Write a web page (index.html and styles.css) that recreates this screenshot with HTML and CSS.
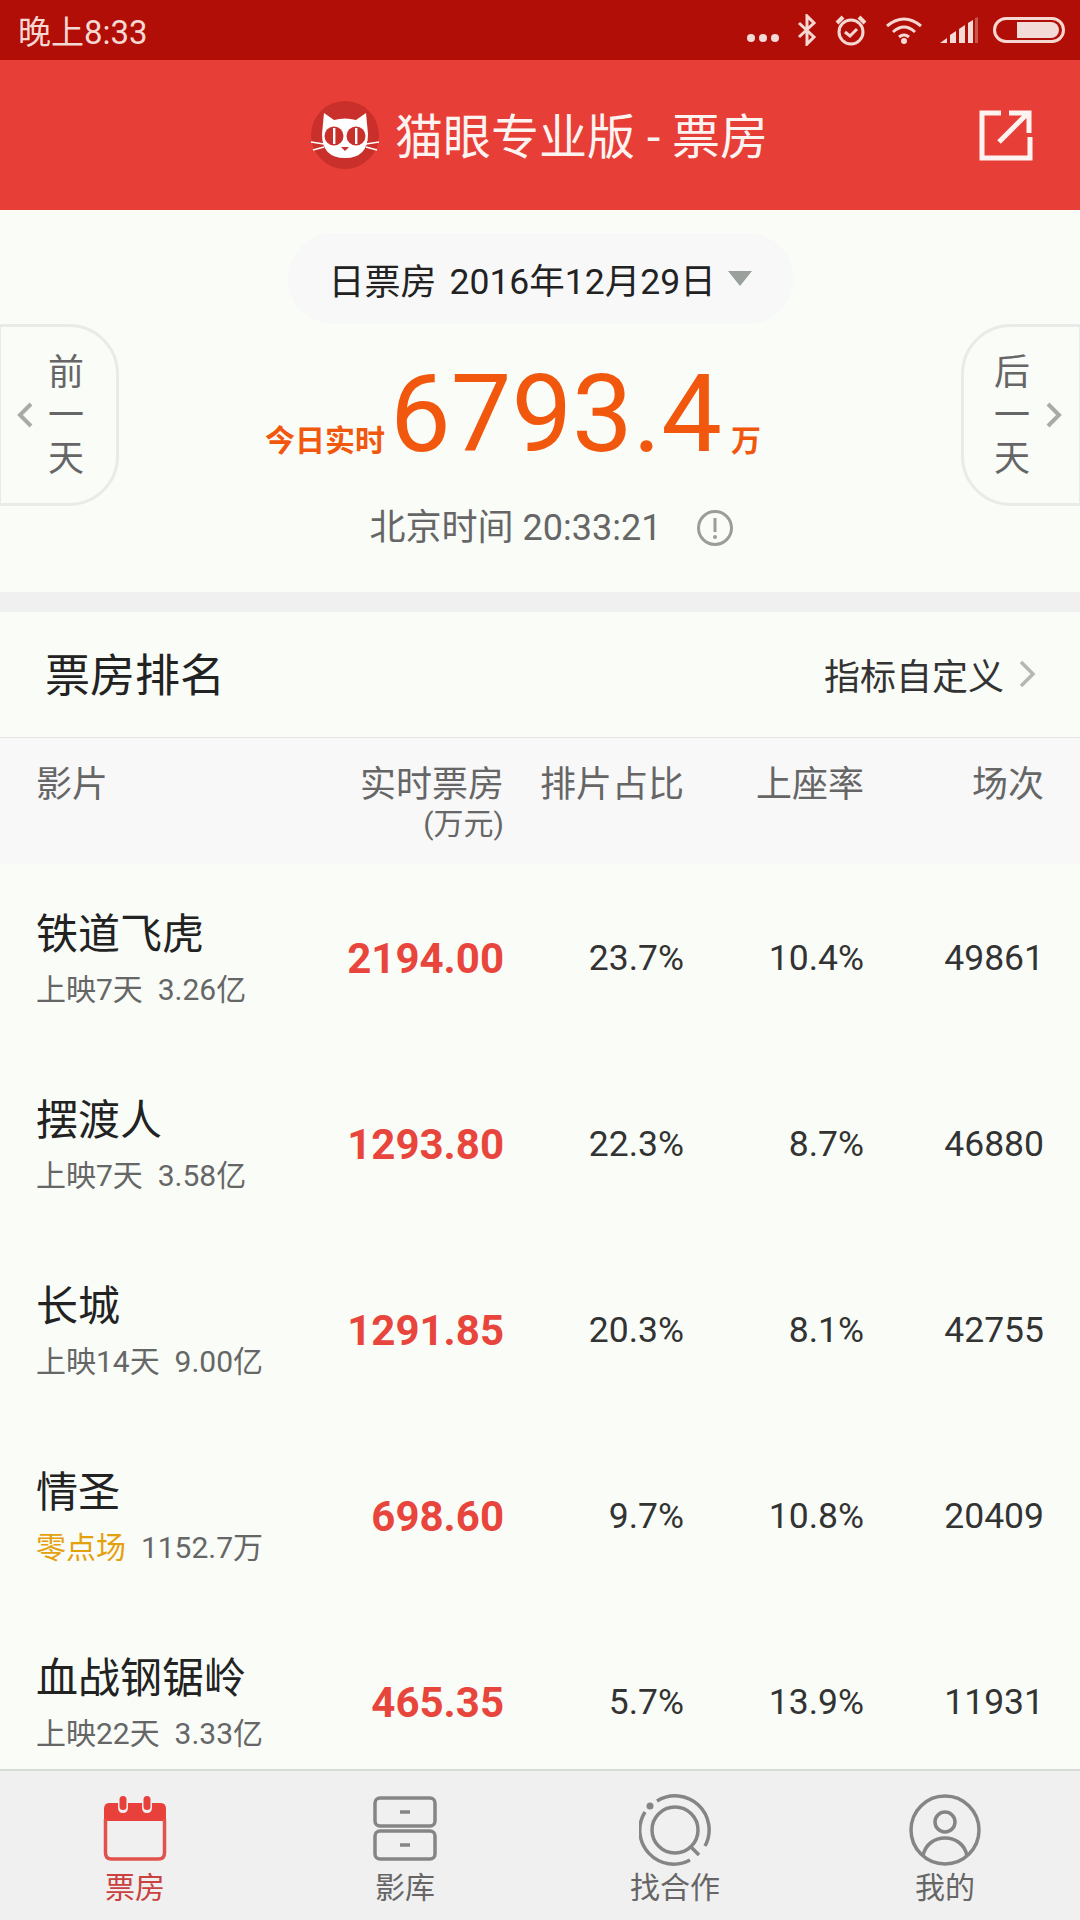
FILE: index.html
```html
<!DOCTYPE html>
<html lang="zh">

<head>
	<meta charset="utf-8">
	<title>猫眼专业版 - 票房</title>
	<link rel="stylesheet" href="styles.css">
</head>

<body>
	<div class="page">
		<div class="statusbar">
			<span class="clock">晚上8:33</span>
			<div class="status-icons">
				<svg class="ic-dots" width="34" height="10" viewBox="0 0 34 10"><circle cx="5" cy="5" r="4"/><circle cx="17" cy="5" r="4"/><circle cx="29" cy="5" r="4"/></svg>
				<svg class="ic-line" width="20" height="32" viewBox="0 0 20 32"><path d="M2 9 L17 23 L10 30 V2 L17 9 L2 23"/></svg>
				<svg class="ic-line" width="34" height="32" viewBox="0 0 34 32"><circle cx="17" cy="18" r="12"/><path d="M11 18 L16 22 L23 15"/><path d="M3 9 L9 3 M31 9 L25 3" stroke-width="4"/></svg>
				<svg class="ic-line" width="38" height="28" viewBox="0 0 38 28"><path d="M2 10 Q19 -4 36 10"/><path d="M8 16 Q19 6 30 16"/><path d="M14 21 Q19 17 24 21"/><circle class="fill" cx="19" cy="25" r="3"/></svg>
				<svg class="ic-signal" width="38" height="26" viewBox="0 0 38 26"><path d="M0 26 L7 21 V26 Z M10 18 L16 14 V26 H10 Z M19 12 L25 8 V26 H19 Z M28 6 L33 3 V26 H28 Z"/><path class="dim" d="M35 1 L38 0 V26 H35 Z"/></svg>
				<svg class="ic-battery" width="72" height="26" viewBox="0 0 72 26"><rect x="1.5" y="1.5" width="69" height="23" rx="11.5"/><path class="fill" d="M24 5 H58 A8 8 0 0 1 58 21 H24 Z"/></svg>
			</div>
		</div>

		<div class="appbar">
			<svg class="cat-logo" width="70" height="70" viewBox="0 0 70 70">
				<circle cx="35" cy="35" r="34" fill="#c9302c"/>
				<path fill="#fff" d="M14 13 L24 20 Q35 17 46 20 L56 13 L58 34 Q58 58 35 58 Q12 58 12 34 Z"/>
				<circle cx="24" cy="36" r="9.500" fill="#c9302c"/>
				<circle cx="46" cy="36" r="9.500" fill="#c9302c"/>
				<path fill="#fff" d="M23 28 h2.400 v16 h-2.400 Z M45 28 h2.400 v16 h-2.400 Z"/>
				<path fill="#c9302c" d="M31 47 h8 l-4 4 Z"/>
				<path stroke="#fff" stroke-width="1.600" fill="none" d="M1 42 L14 44 M3 50 L14 47 M69 42 L56 44 M67 50 L56 47"/>
			</svg>
			<span class="app-title">猫眼专业版 - 票房</span>
			<svg class="share-icon" width="54" height="52" viewBox="0 0 54 52"><path d="M22 4 H3 V49 H51 V28"/><path d="M20 33 L48 5 M30 4 H50 V24" /></svg>
		</div>

		<div class="summary">
			<div class="date-pill">
				<span class="date-kind">日票房</span>
				<span class="date-value">2016年12月29日</span>
				<span class="caret"></span>
			</div>
			<div class="hero-row">
				<div class="day-btn day-prev">
					<svg class="day-chevron" width="16" height="26" viewBox="0 0 16 26"><path d="M14 2 L3 13 L14 24"/></svg>
					<div class="day-text">前<br>一<br>天</div>
				</div>
				<div class="hero">
					<span class="hero-label">今日实时</span>
					<span class="hero-num">6793.4</span>
					<span class="hero-unit">万</span>
				</div>
				<div class="day-btn day-next">
					<div class="day-text">后<br>一<br>天</div>
					<svg class="day-chevron" width="16" height="26" viewBox="0 0 16 26"><path d="M2 2 L13 13 L2 24"/></svg>
				</div>
			</div>
			<div class="time-row">
				<span>北京时间 20:33:21</span>
				<svg class="info-icon" width="36" height="36" viewBox="0 0 36 36"><circle cx="18" cy="18" r="16.500"/><path d="M18 8 V22"/><circle class="fill" cx="18" cy="27" r="2"/></svg>
			</div>
		</div>

		<div class="section-head">
			<span class="section-title">票房排名</span>
			<div class="section-link">
				<span>指标自定义</span>
				<svg class="link-chevron" width="18" height="30" viewBox="0 0 18 30"><path d="M3 3 L15 15 L3 27"/></svg>
			</div>
		</div>

		<div class="table-head">
			<div class="col-film">影片</div>
			<div class="col-num">实时票房<div class="col-unit">(万元)</div></div>
			<div class="col-num">排片占比</div>
			<div class="col-num">上座率</div>
			<div class="col-num">场次</div>
		</div>

		<div class="rows">
			<div class="row">
				<div>
					<div class="film-name">铁道飞虎</div>
					<div class="film-sub">上映7天&nbsp; 3.26亿</div>
				</div>
				<div class="money">2194.00</div>
				<div class="cell">23.7%</div>
				<div class="cell">10.4%</div>
				<div class="cell">49861</div>
			</div>
			<div class="row">
				<div>
					<div class="film-name">摆渡人</div>
					<div class="film-sub">上映7天&nbsp; 3.58亿</div>
				</div>
				<div class="money">1293.80</div>
				<div class="cell">22.3%</div>
				<div class="cell">8.7%</div>
				<div class="cell">46880</div>
			</div>
			<div class="row">
				<div>
					<div class="film-name">长城</div>
					<div class="film-sub">上映14天&nbsp; 9.00亿</div>
				</div>
				<div class="money">1291.85</div>
				<div class="cell">20.3%</div>
				<div class="cell">8.1%</div>
				<div class="cell">42755</div>
			</div>
			<div class="row">
				<div>
					<div class="film-name">情圣</div>
					<div class="film-sub"><span class="midnight">零点场</span>&nbsp; 1152.7万</div>
				</div>
				<div class="money">698.60</div>
				<div class="cell">9.7%</div>
				<div class="cell">10.8%</div>
				<div class="cell">20409</div>
			</div>
			<div class="row">
				<div>
					<div class="film-name">血战钢锯岭</div>
					<div class="film-sub">上映22天&nbsp; 3.33亿</div>
				</div>
				<div class="money">465.35</div>
				<div class="cell">5.7%</div>
				<div class="cell">13.9%</div>
				<div class="cell">11931</div>
			</div>
		</div>

		<div class="tabbar">
			<div class="tab tab-active">
				<svg class="tab-square" width="64" height="66" viewBox="0 0 64 66">
					<path fill="#e8403a" d="M6 8 H15 V12 Q15 18 20 18 Q25 18 25 12 V8 H39 V12 Q39 18 44 18 Q49 18 49 12 V8 H58 Q63 8 63 14 V26 H1 V14 Q1 8 6 8 Z"/>
					<rect x="16.500" y="1" width="7" height="14" rx="3.500" fill="#e8403a"/>
					<rect x="40.500" y="1" width="7" height="14" rx="3.500" fill="#e8403a"/>
					<path fill="none" stroke="#e0524c" stroke-width="3.500" d="M2.500 24 V58 Q2.500 64 8.500 64 H55.500 Q61.500 64 61.500 58 V24"/>
				</svg>
				<span>票房</span>
			</div>
			<div class="tab">
				<svg class="tab-line tab-square" width="64" height="66" viewBox="0 0 64 66">
					<rect x="2" y="3" width="60" height="28" rx="5"/>
					<rect x="2" y="36" width="60" height="28" rx="5"/>
					<path d="M27 17 H37 M27 50 H37"/>
				</svg>
				<span>影库</span>
			</div>
			<div class="tab">
				<svg class="tab-line" width="72" height="72" viewBox="0 0 72 72">
					<path d="M18 7 A34 34 0 0 1 66 52"/>
					<path d="M51 66 A34 34 0 0 1 6 18"/>
					<circle class="fill" cx="11" cy="12" r="3.500"/>
					<circle cx="36" cy="36" r="23"/>
					<path d="M52 53 L60 61"/>
				</svg>
				<span>找合作</span>
			</div>
			<div class="tab">
				<svg class="tab-line" width="72" height="72" viewBox="0 0 72 72">
					<circle cx="36" cy="36" r="34"/>
					<circle cx="36" cy="28" r="10"/>
					<path d="M14 62 C18 38 54 38 58 62"/>
				</svg>
				<span>我的</span>
			</div>
		</div>
	</div>
</body>

</html>
```

FILE: styles.css
```css
html, body {
	margin: 0;
	padding: 0;
}

body {
	font-family: Roboto, "Noto Sans CJK SC", sans-serif;
	background: #f9fcf7;
}

.page {
	width: 1080px;
	height: 1920px;
	display: flex;
	flex-direction: column;
	overflow: hidden;
}

/* Status bar */

.statusbar {
	height: 60px;
	flex: none;
	background: #b00e06;
	color: #f6d8d3;
	display: flex;
	align-items: center;
	justify-content: space-between;
	padding: 0 15px 0 18px;
}

.clock {
	font-size: 33px;
	margin-top: -1px;
}

.status-icons {
	display: flex;
	align-items: center;
}

.status-icons svg {
	fill: none;
	stroke: #f6d8d3;
	stroke-width: 3;
}

.status-icons .fill {
	fill: #f3dcd8;
	stroke: none;
}

.ic-dots {
	fill: #f3dcd8 !important;
	stroke: none !important;
	margin-top: 16px;
}

.ic-line {
	margin-left: 17px;
}

.ic-signal {
	fill: #f3dcd8 !important;
	stroke: none !important;
	margin-left: 17px;
}

.ic-signal .dim {
	opacity: 0.35;
}

.ic-battery {
	margin-left: 15px;
}

/* App bar */

.appbar {
	height: 150px;
	flex: none;
	background: #e73e37;
	display: flex;
	align-items: center;
	padding-left: 310px;
	color: #fdf3f0;
}

.cat-logo {
	margin-top: -1px;
}

.app-title {
	font-size: 48px;
	margin-left: 15px;
	margin-top: -4px;
}

.share-icon {
	margin-left: auto;
	margin-right: 47px;
	fill: none;
	stroke: #fdf3f0;
	stroke-width: 5;
}

/* Daily summary */

.summary {
	height: 382px;
	flex: none;
	display: flex;
	flex-direction: column;
	align-items: center;
}

.date-pill {
	margin-top: 23px;
	width: 505px;
	height: 91px;
	box-sizing: border-box;
	padding-left: 41px;
	border-radius: 46px;
	background: #f7f8f7;
	display: flex;
	align-items: center;
	font-size: 36px;
	color: #222;
}

.date-kind {
	margin-right: 13px;
}

.date-value {
	font-size: 35.500px;
}

.caret {
	margin-left: 12px;
	border-left: 12px solid transparent;
	border-right: 12px solid transparent;
	border-top: 15px solid #9aa09c;
}

.hero-row {
	width: 1084px;
	flex: none;
	display: flex;
	justify-content: space-between;
}

.day-btn {
	width: 121px;
	height: 182px;
	box-sizing: border-box;
	border: 3px solid #e8ebe8;
	display: flex;
	align-items: center;
	color: #666;
}

.day-prev {
	border-radius: 0 50px 50px 0;
	padding-left: 16px;
}

.day-next {
	border-radius: 50px 0 0 50px;
	padding-left: 30px;
}

.day-text {
	font-size: 36px;
	line-height: 43px;
	padding-top: 3px;
}

.day-prev .day-text {
	margin-left: 15px;
}

.day-next .day-text {
	margin-right: 16px;
}

.day-chevron {
	fill: none;
	stroke: #a8aca8;
	stroke-width: 4;
	flex: none;
}

.hero {
	display: flex;
	align-items: baseline;
	color: #f2570e;
	margin-right: 54px;
	padding-top: 26px;
	font-weight: 500;
}

.hero-label {
	font-size: 30px;
	font-weight: 700;
	margin-right: 5px;
}

.hero-num {
	font-size: 108px;
	font-weight: 400;
	line-height: 128px;
}

.hero-unit {
	font-size: 30px;
	font-weight: 700;
	margin-left: 9px;
}

.time-row {
	display: flex;
	align-items: center;
	font-size: 36px;
	line-height: 44px;
	color: #666;
	margin-left: 23px;
}

.info-icon {
	margin-left: 36px;
	fill: none;
	stroke: #9a9e9a;
	stroke-width: 3;
}

.info-icon .fill {
	fill: #9a9e9a;
	stroke: none;
}

/* Ranking section */

.section-head {
	height: 126px;
	flex: none;
	box-sizing: border-box;
	margin-top: 20px;
	border-bottom: 1px solid #e4e6e4;
	display: flex;
	align-items: center;
	justify-content: space-between;
	padding: 0 44px 4px 45px;
	box-shadow: 0 -20px 0 #f0f0f0;
}

.section-title {
	font-size: 45px;
	color: #222;
}

.section-link {
	display: flex;
	align-items: center;
	font-size: 36px;
	color: #333;
	margin-top: 2px;
}

.link-chevron {
	margin-left: 14px;
	fill: none;
	stroke: #b4b8b4;
	stroke-width: 3.500;
}

.table-head,
.row {
	display: grid;
	grid-template-columns: 1fr 200px 180px 180px 180px;
	padding: 0 36px;
}

.table-head {
	height: 126px;
	flex: none;
	box-sizing: border-box;
	padding-top: 25px;
	background: #f8f8f8;
	font-size: 36px;
	line-height: 44px;
	color: #666;
}

.col-num {
	text-align: right;
}

.col-unit {
	font-size: 30px;
	line-height: 34px;
}

.rows {
	flex: 1;
	overflow: hidden;
	padding-top: 1px;
}

.row {
	height: 186px;
	align-items: center;
}

.film-name {
	font-size: 42px;
	line-height: 58px;
	color: #222;
}

.film-sub {
	font-size: 30px;
	line-height: 40px;
	margin-top: 6px;
	color: #666;
}

.midnight {
	color: #e5a00d;
}

.money {
	text-align: right;
	font-size: 42px;
	font-weight: 700;
	color: #e8453c;
}

.cell {
	text-align: right;
	font-size: 35.500px;
	color: #333;
}

/* Bottom tabs */

.tabbar {
	height: 151px;
	flex: none;
	box-sizing: border-box;
	border-top: 2px solid #d8dcd8;
	background: #f0f0f0;
	display: grid;
	grid-template-columns: repeat(4, 1fr);
}

.tab {
	display: flex;
	flex-direction: column;
	align-items: center;
	justify-content: flex-end;
	padding-bottom: 13px;
	font-size: 30px;
	line-height: 38px;
	color: #666;
}

.tab-active {
	color: #c9423f;
}

.tab svg {
	margin-bottom: 3px;
}

.tab svg.tab-square {
	margin-bottom: 8px;
}

.tab-line {
	fill: none;
	stroke: #858585;
	stroke-width: 3.500;
}

.tab-line .fill {
	fill: #858585;
	stroke: none;
}
```
